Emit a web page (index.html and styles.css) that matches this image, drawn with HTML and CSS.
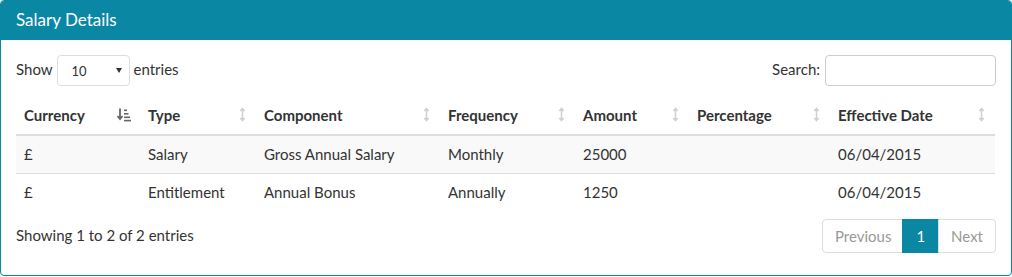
FILE: index.html
```html
<!DOCTYPE html>
<html>
<head>
<meta charset="utf-8">
<link rel="stylesheet" href="styles.css">
</head>
<body>
<div class="panel">
  <div class="panel-heading">Salary Details</div>
  <div class="panel-body">
    <div class="controls">
      <div class="length">
        <span>Show</span>
        <div class="select"><span class="select-val">10</span><span class="caret"></span></div>
        <span>entries</span>
      </div>
      <div class="filter">
        <span>Search:</span>
        <div class="input"></div>
      </div>
    </div>
    <table class="grid">
      <colgroup>
        <col style="width:124px"><col style="width:116px"><col style="width:184px"><col style="width:135px"><col style="width:114px"><col style="width:141px"><col style="width:165px">
      </colgroup>
      <thead>
        <tr>
          <th><span>Currency</span><svg class="ico asc" viewBox="0 0 14 14"><path d="M3 1v10M0.5 8.5L3 11.5 5.5 8.5" fill="none" stroke="#666" stroke-width="1.8"/><rect x="7" y="2" width="3" height="1.6" fill="#666"/><rect x="7" y="5.5" width="4.5" height="1.6" fill="#666"/><rect x="7" y="9" width="6" height="1.6" fill="#666"/><rect x="7" y="12.3" width="7" height="1.6" fill="#666"/></svg></th>
          <th><span>Type</span><svg class="ico" viewBox="0 0 8 16"><path d="M4 2v12M1.5 4L4 1 6.5 4M1.5 12L4 15 6.5 12" fill="none" stroke="#d0d0d0" stroke-width="1.8"/></svg></th>
          <th><span>Component</span><svg class="ico" viewBox="0 0 8 16"><path d="M4 2v12M1.5 4L4 1 6.5 4M1.5 12L4 15 6.5 12" fill="none" stroke="#d0d0d0" stroke-width="1.8"/></svg></th>
          <th><span>Frequency</span><svg class="ico" viewBox="0 0 8 16"><path d="M4 2v12M1.5 4L4 1 6.5 4M1.5 12L4 15 6.5 12" fill="none" stroke="#d0d0d0" stroke-width="1.8"/></svg></th>
          <th><span>Amount</span><svg class="ico" viewBox="0 0 8 16"><path d="M4 2v12M1.5 4L4 1 6.5 4M1.5 12L4 15 6.5 12" fill="none" stroke="#d0d0d0" stroke-width="1.8"/></svg></th>
          <th><span>Percentage</span><svg class="ico" viewBox="0 0 8 16"><path d="M4 2v12M1.5 4L4 1 6.5 4M1.5 12L4 15 6.5 12" fill="none" stroke="#d0d0d0" stroke-width="1.8"/></svg></th>
          <th><span>Effective Date</span><svg class="ico" viewBox="0 0 8 16"><path d="M4 2v12M1.5 4L4 1 6.5 4M1.5 12L4 15 6.5 12" fill="none" stroke="#d0d0d0" stroke-width="1.8"/></svg></th>
        </tr>
      </thead>
      <tbody>
        <tr class="odd"><td>£</td><td>Salary</td><td>Gross Annual Salary</td><td>Monthly</td><td>25000</td><td></td><td>06/04/2015</td></tr>
        <tr><td>£</td><td>Entitlement</td><td>Annual Bonus</td><td>Annually</td><td>1250</td><td></td><td>06/04/2015</td></tr>
      </tbody>
    </table>
    <div class="footer">
      <div class="info">Showing 1 to 2 of 2 entries</div>
      <div class="pager">
        <span class="pg disabled first">Previous</span>
        <span class="pg active">1</span>
        <span class="pg disabled last">Next</span>
      </div>
    </div>
  </div>
</div>
</body>
</html>
```
FILE: styles.css
```css
* { box-sizing: border-box; }
html, body { margin: 0; padding: 0; background: #fff; }
body {
  font-family: Lato, "Open Sans", sans-serif;
  font-size: 15px;
  line-height: 1.42857;
  color: #333;
}
.panel {
  width: 1012px;
  height: 276px;
  border: 1px solid #0a87a3;
  border-radius: 4px;
  background: #fff;
  overflow: hidden;
}
.panel-heading {
  background: #0a87a3;
  color: #fff;
  height: 39px;
  padding: 8px 15px 0;
  font-size: 17px;
  line-height: 22px;
}
.panel-body {
  padding: 15px 15px 0;
}
.controls {
  display: flex;
  justify-content: space-between;
  align-items: center;
  height: 30px;
  margin-bottom: 12px;
}
.length, .filter {
  display: flex;
  align-items: center;
  gap: 4px;
}
.filter { gap: 5px; }
.select {
  width: 73px;
  height: 31px;
  border: 1px solid #ddd;
  border-radius: 4px;
  display: flex;
  align-items: center;
  justify-content: space-between;
  padding: 2px 7px 0 14px;
  font-size: 13px;
}
.caret {
  width: 0; height: 0;
  border-left: 3.5px solid transparent;
  border-right: 3.5px solid transparent;
  border-top: 5px solid #333;
  margin-top: -2px;
}
.input {
  width: 171px;
  height: 31px;
  border: 1px solid #ccc;
  border-radius: 4px;
}
.grid {
  width: 979px;
  table-layout: fixed;
  border-collapse: collapse;
}
.grid th {
  text-align: left;
  font-weight: bold;
  padding: 8px;
  line-height: 21px;
  border-bottom: 2px solid #ddd;
  position: relative;
}
.grid th span { display: inline-block; }
.ico {
  position: absolute;
  right: 10px;
  top: 10px;
  width: 7px;
  height: 15px;
}
.ico.asc {
  width: 14px;
  height: 15px;
  right: 9px;
  top: 10px;
}
.grid td {
  padding: 8px;
  line-height: 21px;
  border-bottom: 1px solid #ddd;
}
.grid tbody tr:last-child td { border-bottom: none; }
.grid tr.odd td { background: #f9f9f9; }
.footer {
  display: flex;
  justify-content: space-between;
  align-items: center;
  margin-top: 8px;
}
.pager {
  display: flex;
}
.pg {
  height: 34px;
  padding: 6px 12px;
  border: 1px solid #ddd;
  margin-left: -1px;
  line-height: 20px;
}
.pg.disabled { color: #999; }
.pg.first { border-radius: 4px 0 0 4px; padding: 6px 11px 6px 12px; }
.pg.last { border-radius: 0 4px 4px 0; }
.pg.active {
  background: #0a87a3;
  border-color: #0a87a3;
  color: #fff;
  padding: 6px 13px;
}
```
